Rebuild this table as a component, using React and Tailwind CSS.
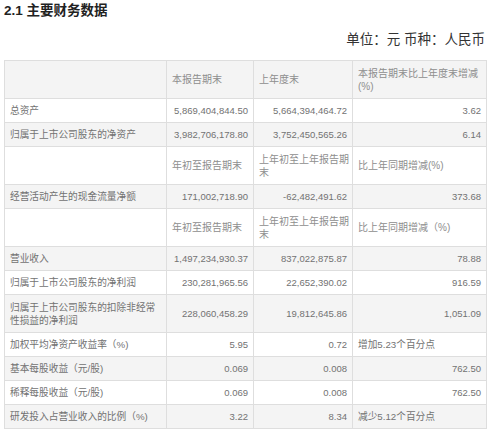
import React from "react";

const F = { fontFamily: '"Liberation Sans", "Noto Sans CJK SC", sans-serif' };

const rows = [
  { type: "h", bg: "bg-[#f4f4f4]", cells: ["", "本报告期末", "上年度末", <>本报告期末比上年度末增减<br />(%)</>] },
  { bg: "bg-white", cells: ["总资产", "5,869,404,844.50", "5,664,394,464.72", "3.62"] },
  { bg: "bg-[#f4f4f4]", cells: ["归属于上市公司股东的净资产", "3,982,706,178.80", "3,752,450,565.26", "6.14"] },
  { type: "h", bg: "bg-white", cells: ["", "年初至报告期末", <>上年初至上年报告期<br />末</>, "比上年同期增减(%)"] },
  { bg: "bg-[#f4f4f4]", cells: ["经营活动产生的现金流量净额", "171,002,718.90", "-62,482,491.62", "373.68"] },
  { type: "h", bg: "bg-white", cells: ["", "年初至报告期末", <>上年初至上年报告期<br />末</>, "比上年同期增减（%)"] },
  { bg: "bg-[#f4f4f4]", cells: ["营业收入", "1,497,234,930.37", "837,022,875.87", "78.88"] },
  { bg: "bg-white", cells: ["归属于上市公司股东的净利润", "230,281,965.56", "22,652,390.02", "916.59"] },
  { bg: "bg-[#f4f4f4]", tall: true, cells: [<>归属于上市公司股东的扣除非经常<br />性损益的净利润</>, "228,060,458.29", "19,812,645.86", "1,051.09"] },
  { bg: "bg-white", left4: true, cells: ["加权平均净资产收益率（%)", "5.95", "0.72", "增加5.23个百分点"] },
  { bg: "bg-[#f4f4f4]", cells: ["基本每股收益（元/股)", "0.069", "0.008", "762.50"] },
  { bg: "bg-white", cells: ["稀释每股收益（元/股)", "0.069", "0.008", "762.50"] },
  { bg: "bg-[#f4f4f4]", left4: true, cells: ["研发投入占营业收入的比例（%)", "3.22", "8.34", "减少5.12个百分点"] },
];

export default function App() {
  return (
    <div className="w-[488px] h-[432px] bg-white overflow-hidden" style={F}>
      <div className="pl-[4px] pt-[2px] h-[20px] text-[13.5px] leading-[17px] font-bold text-[#222]">
        2.1 主要财务数据
      </div>
      <div className="h-[40px] flex items-center justify-end pr-[3px] text-[13.5px] text-[#333]">
        单位：元 币种：人民币
      </div>
      <table className="ml-[4px] w-[482px] border-collapse table-fixed text-[9.7px] leading-[13px]">
        <colgroup>
          <col className="w-[162px]" />
          <col className="w-[87px]" />
          <col className="w-[99px]" />
          <col className="w-[134px]" />
        </colgroup>
        <tbody>
          {rows.map((r, i) => {
            const h = r.type === "h" || r.tall ? "h-[38px]" : "h-[24px]";
            return (
              <tr key={i} className={r.bg}>
                {r.cells.map((c, j) => {
                  if (r.type === "h") {
                    return (
                      <td key={j} className={`${h} border border-[#dedede] px-[5px] align-middle text-left text-[#8e8e8e] text-[10px] whitespace-nowrap`}>
                        {c}
                      </td>
                    );
                  }
                  if (j === 0 || (j === 3 && r.left4)) {
                    return (
                      <td key={j} className={`${h} border border-[#dedede] px-[5px] align-middle text-left text-[#727272] whitespace-nowrap`}>
                        {c}
                      </td>
                    );
                  }
                  return (
                    <td key={j} className={`${h} border border-[#dedede] px-[5px] align-middle text-right text-[#727272] text-[9.5px] whitespace-nowrap`}>
                      {c}
                    </td>
                  );
                })}
              </tr>
            );
          })}
        </tbody>
      </table>
    </div>
  );
}
